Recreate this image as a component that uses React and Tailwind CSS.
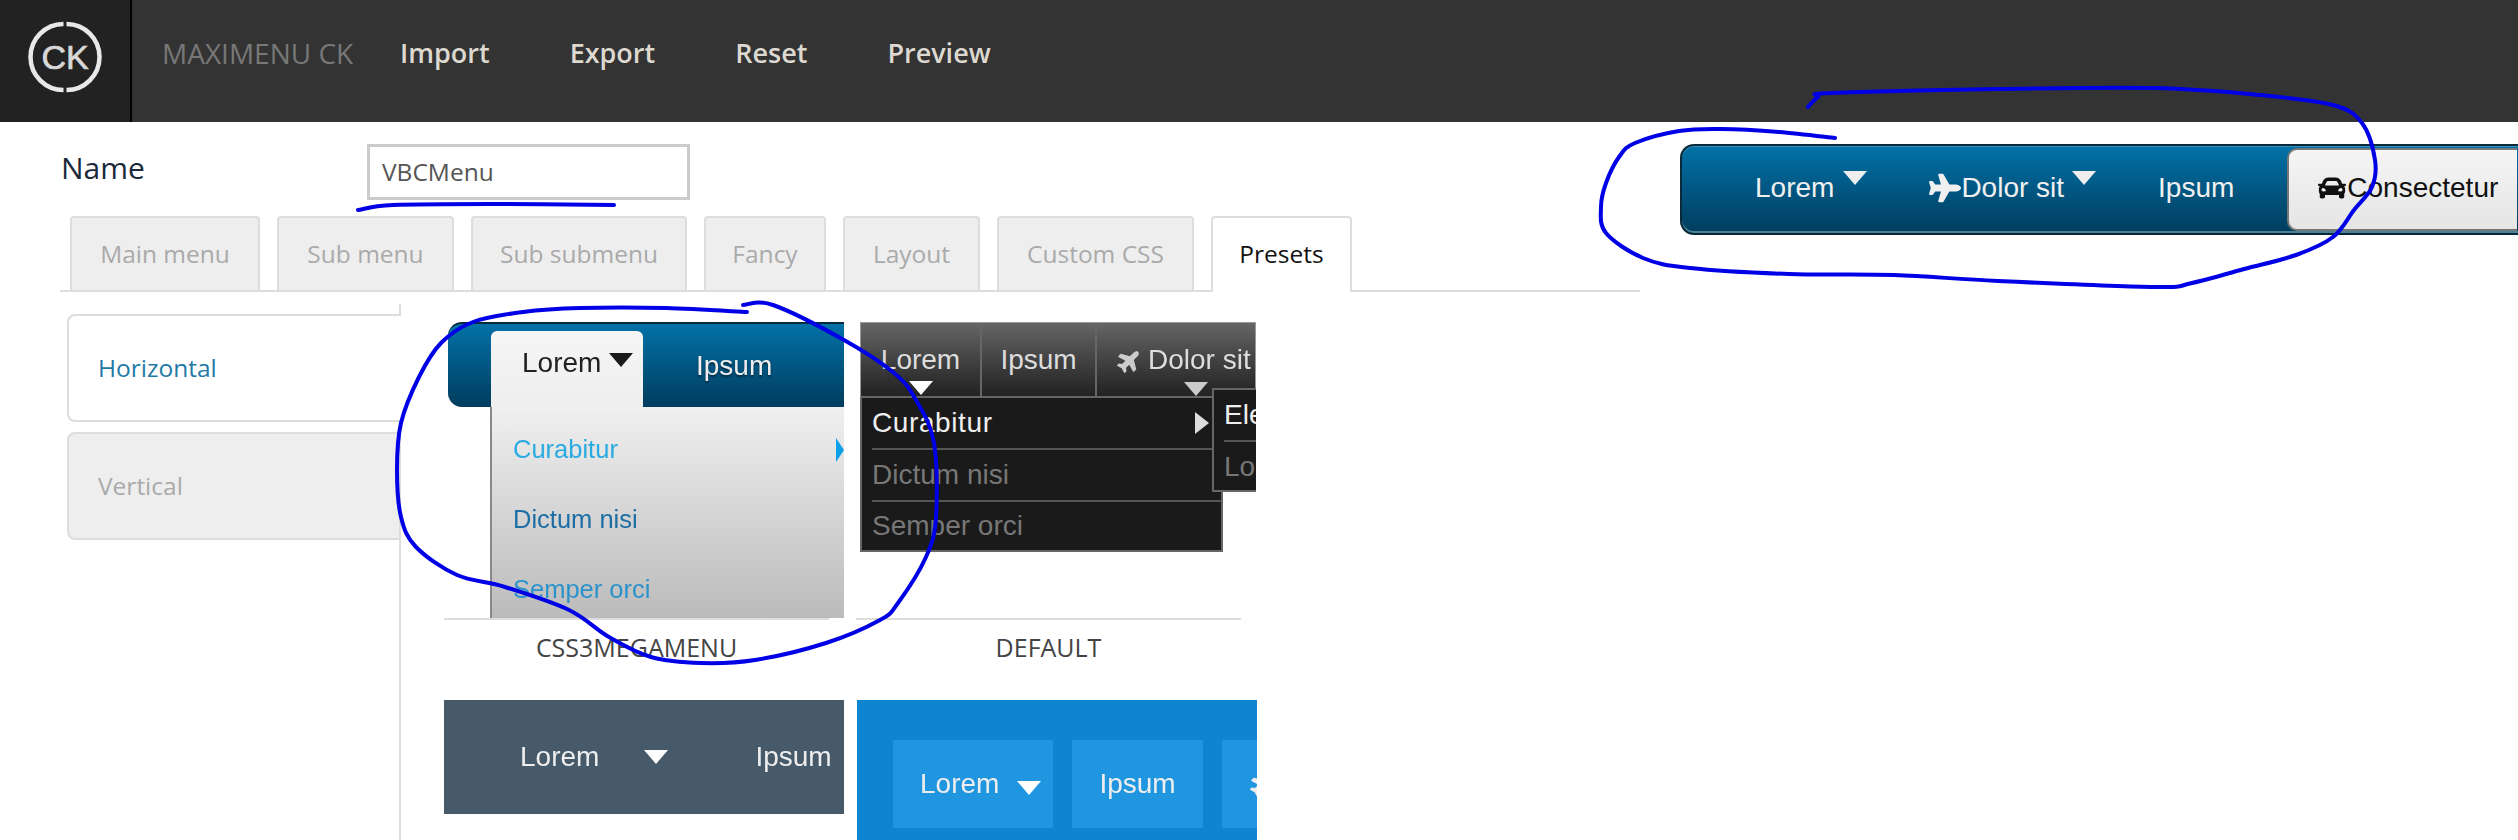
import { FaPlane, FaCar } from "react-icons/fa";

const tabs = [
  { label: "Main menu", width: "w-[190px]" },
  { label: "Sub menu", width: "w-[177px]" },
  { label: "Sub submenu", width: "w-[216px]" },
  { label: "Fancy", width: "w-[122px]" },
  { label: "Layout", width: "w-[137px]" },
  { label: "Custom CSS", width: "w-[197px]" },
];

// pen strokes someone scribbled over the screenshot
const scribbles = [
  [[1835,138],[1779,132],[1721,129],[1679,131],[1635,143],[1619,157],[1606,183],[1601,207],[1606,233],[1643,258],[1690,268],[1789,274],[1894,275],[1998,281],[2155,287],[2192,283],[2244,269],[2296,255],[2333,237],[2354,210],[2372,187],[2375,160],[2362,123],[2333,105],[2260,95],[2155,88],[1998,89],[1831,93],[1818,97],[1808,107]],
  [[747,312],[666,308],[580,308],[523,312],[473,322],[441,343],[419,377],[401,423],[397,470],[401,517],[416,547],[457,575],[505,587],[569,610],[609,637],[651,657],[701,663],[755,660],[826,643],[880,620],[898,603],[926,557],[936,517],[934,443],[916,400],[894,373],[844,340],[773,305],[743,305]],
  [[358,210],[393,205],[491,204],[614,205]],
];

const toPath = (pts) => {
  let d = `M${pts[0][0]} ${pts[0][1]}`;
  for (let i = 0; i < pts.length - 1; i++) {
    const p0 = pts[i - 1] || pts[i];
    const p1 = pts[i];
    const p2 = pts[i + 1];
    const p3 = pts[i + 2] || p2;
    const c1x = p1[0] + (p2[0] - p0[0]) / 6;
    const c1y = p1[1] + (p2[1] - p0[1]) / 6;
    const c2x = p2[0] - (p3[0] - p1[0]) / 6;
    const c2y = p2[1] - (p3[1] - p1[1]) / 6;
    d += ` C${c1x} ${c1y} ${c2x} ${c2y} ${p2[0]} ${p2[1]}`;
  }
  return d;
};

const Logo = () => (
  <svg width="130" height="122" viewBox="0 0 130 122">
    <g fill="none" stroke="#e8e8e8" strokeWidth="4.5">
      <path d="M63.5 24 A33 33 0 0 0 63.5 90" />
      <path d="M66.5 24 A33 33 0 0 1 66.5 90" />
    </g>
    <text
      x="65"
      y="69"
      textAnchor="middle"
      fontSize="34"
      fontFamily="Liberation Sans, sans-serif"
      fill="#d8d8d8"
      stroke="#d8d8d8"
      strokeWidth="0.7"
    >
      CK
    </text>
  </svg>
);

const Arrow = ({ className }) => (
  <span className={`block h-0 w-0 border-x-[12px] border-t-[14px] border-x-transparent ${className}`} />
);

const Header = () => (
  <header className="flex h-[122px] items-center bg-[#333] font-['Open_Sans',sans-serif]">
    <div className="h-full w-[132px] shrink-0 border-r-2 border-black bg-[#222]">
      <Logo />
    </div>
    <span className="ml-[30px] w-[238px] pb-[16px] text-[28px] text-[#777]">MAXIMENU CK</span>
    <nav className="flex gap-[80px] pb-[16px] text-[27px] font-semibold text-[#ddd9d0]">
      <a>Import</a>
      <a>Export</a>
      <a>Reset</a>
      <a>Preview</a>
    </nav>
  </header>
);

const TabBar = () => (
  <div className="mt-4 flex h-[76px] gap-[17px] border-b-2 border-[#ddd] pl-[10px] text-[24.5px]">
    {tabs.map((t) => (
      <div
        key={t.label}
        className={`flex h-[74px] ${t.width} items-center justify-center rounded-t border-2 border-b-0 border-[#ddd] bg-[#eee] text-[#aaa]`}
      >
        {t.label}
      </div>
    ))}
    <div className="flex h-[76px] w-[141px] items-center justify-center rounded-t border-2 border-b-0 border-[#ddd] bg-white pb-[2px] text-[#111]">
      Presets
    </div>
  </div>
);

const SideTabs = () => (
  <aside className="mt-3 h-[560px] w-[341px] shrink-0 border-r-2 border-[#ddd] pt-[10px] pl-[7px] text-[24.5px]">
    <div className="-mr-[2px] flex h-[108px] items-center rounded-l-lg border-2 border-r-0 border-[#ddd] bg-white pl-[29px] text-[#1f7aa5]">
      Horizontal
    </div>
    <div className="mt-[10px] flex h-[108px] items-center rounded-l-lg border-2 border-r-0 border-[#ddd] bg-[#eee] pl-[29px] text-[#aaa]">
      Vertical
    </div>
  </aside>
);

const MegaPreview = () => (
  <div className="h-[296px] w-[400px] pl-1 font-['Liberation_Sans',sans-serif] blur-[0.4px]">
    <div className="flex h-[85px] items-end rounded-l-[14px] border-t-2 border-[#0a2a3a] bg-gradient-to-b from-[#0272a8] to-[#013d5e] pl-[43px] text-[28px] text-[#eee]">
      <div className="flex h-[76px] w-[152px] items-start gap-2 rounded-t-md bg-gradient-to-b from-[#f6f6f6] to-[#eee] pt-[10px] pl-[31px] leading-[44px] text-[#222]">
        Lorem
        <Arrow className="mt-[12px] border-t-[#1a1a1a]" />
      </div>
      <span className="ml-[53px] self-center pt-[1px] [text-shadow:0_2px_2px_#012a40]">Ipsum</span>
    </div>
    <div className="relative ml-[42px] flex h-[211px] w-[354px] flex-col gap-[40px] border-l-2 border-[#888] bg-gradient-to-b from-[#f0f0f0] to-[#bbb] pt-[27px] pl-[21px] text-[25.5px] leading-[30px]">
      <span className="text-[#29abe2]">Curabitur</span>
      <span className="text-[#1c6ea4]">Dictum nisi</span>
      <span className="text-[#2b93cc]">Semper orci</span>
      <span className="absolute top-[31px] right-0 h-0 w-0 border-y-[12px] border-l-[8px] border-y-transparent border-l-[#0d9fe8]" />
    </div>
  </div>
);

const DefaultPreview = () => (
  <div className="relative ml-1 h-[230px] w-[396px] overflow-hidden font-['Liberation_Sans',sans-serif] text-[28px] blur-[0.4px]">
    <div className="flex h-[76px] border border-b-2 border-[#999] border-b-[#666] bg-gradient-to-b from-[#666] to-[#222] text-[#ddd]">
      <div className="flex w-[121px] flex-col items-center border-r-2 border-[#666] pt-[16px] leading-[42px]">
        Lorem
        <Arrow className="border-t-white" />
      </div>
      <div className="flex w-[115px] justify-center border-r-2 border-[#666] pt-[16px] leading-[42px]">Ipsum</div>
      <div className="relative flex-1 whitespace-nowrap pt-[16px] pl-[20px] leading-[42px]">
        <span className="inline-flex items-center gap-[6px]">
          <FaPlane className="-rotate-45 text-[25px] text-[#ccc]" />
          Dolor sit
        </span>
        <Arrow className="absolute top-[59px] left-[87px] border-t-[#ccc]" />
      </div>
    </div>
    <div className="h-[154px] w-[363px] border-2 border-t-0 border-[#666] bg-[#1a1a1a] pl-[10px] leading-[50px]">
      <div className="relative border-b-2 border-[#555] tracking-[0.6px] text-[#eee]">
        Curabitur
        <span className="absolute top-[14px] right-[12px] h-0 w-0 border-y-[11px] border-l-[14px] border-y-transparent border-l-[#ddd]" />
      </div>
      <div className="border-b-2 border-[#555] text-[#777]">Dictum nisi</div>
      <div className="-mt-px text-[#777]">Semper orci</div>
    </div>
    <div className="absolute top-[66px] left-[352px] h-[104px] w-[60px] border-2 border-[#666] bg-[#1a1a1a] pl-[10px] leading-[50px]">
      <div className="border-b-2 border-[#555] text-[#eee]">Ele</div>
      <div className="text-[#777]">Lo</div>
    </div>
  </div>
);

const SlatePreview = () => (
  <div className="flex h-[114px] w-[400px] items-center bg-[#465a6a] pl-[76px] font-['Liberation_Sans',sans-serif] text-[28px] text-[#eee] blur-[0.3px]">
    Lorem
    <Arrow className="mr-[87px] ml-[45px] border-t-white" />
    Ipsum
  </div>
);

const BluePreview = () => (
  <div className="ml-px flex h-[140px] w-[400px] items-start gap-[19px] overflow-hidden bg-[#0f84cf] pt-[40px] pl-[36px] font-['Liberation_Sans',sans-serif] text-[28px] text-[#eee] blur-[0.3px]">
    <div className="flex h-[88px] w-[160px] shrink-0 items-center bg-[#2196e0] pl-[27px]">
      Lorem
      <Arrow className="mt-[8px] ml-[18px] border-t-white" />
    </div>
    <div className="flex h-[88px] w-[131px] shrink-0 items-center justify-center bg-[#2196e0]">Ipsum</div>
    <div className="flex h-[88px] w-[100px] shrink-0 items-center bg-[#2196e0] pl-[28px]">
      <FaPlane className="-rotate-45 text-[25px]" />
    </div>
  </div>
);

const PresetCell = ({ name, children }) => (
  <div className="w-[385px]">
    {children}
    <div className="border-t-2 border-[#ddd] pt-[11px] pb-[37px] text-center text-[25px] leading-[32px] text-[#444]">
      {name}
    </div>
  </div>
);

const Presets = () => (
  <div className="ml-[43px] pt-[30px]">
    <div className="grid grid-cols-[385px_385px] gap-x-[27px]">
      <PresetCell name="CSS3MEGAMENU">
        <MegaPreview />
      </PresetCell>
      <PresetCell name="DEFAULT">
        <div className="h-[296px]">
          <DefaultPreview />
        </div>
      </PresetCell>
      <SlatePreview />
      <BluePreview />
    </div>
  </div>
);

const LivePreview = () => (
  <div className="ml-10 flex h-[91px] flex-1 items-center rounded-l-[14px] border-2 border-r-0 border-[#0a2a3a] bg-gradient-to-b from-[#0272a8] to-[#013d5e] pb-[3px] pl-[73px] font-['Liberation_Sans',sans-serif] text-[28px] whitespace-nowrap text-[#f0f0f0] shadow-[inset_0_1px_0_#3c8fb8,inset_0_-2px_0_#4d8296]">
    <span>Lorem</span>
    <Arrow className="mb-[20px] ml-[9px] border-t-[#eee]" />
    <FaPlane className="ml-[62px] h-[32px] w-[32px]" />
    <span>Dolor sit</span>
    <Arrow className="mb-[20px] ml-[8px] border-t-[#eee]" />
    <span className="ml-[62px]">Ipsum</span>
    <div className="-mb-[3px] ml-[53px] flex h-[83px] w-[230px] items-center rounded-l-[10px] border-2 border-r-0 border-[#777] bg-gradient-to-b from-[#f5f5f5] to-[#e5e5e5] pb-[3px] pl-[29px] text-[#111]">
      <FaCar className="h-[28px] w-[28px]" />
      <span className="ml-[1px]">Consectetur</span>
    </div>
  </div>
);

export default function App() {
  return (
    <div className="relative h-[840px] w-[2518px] overflow-hidden bg-white font-['Open_Sans',sans-serif]">
      <Header />
      <div className="flex pt-[22px]">
        <section className="w-[1640px] shrink-0 pl-[60px]">
          <div className="flex h-[56px]">
            <label className="w-[307px] pl-[1px] text-[30px] leading-[48px] text-[#1a2a3a]">Name</label>
            <input
              readOnly
              value="VBCMenu"
              className="h-[56px] w-[323px] border-[3px] border-[#ccc] pb-[2px] pl-[12px] text-[24.5px] text-[#555] outline-none"
            />
          </div>
          <TabBar />
          <div className="flex">
            <SideTabs />
            <Presets />
          </div>
        </section>
        <LivePreview />
      </div>
      <svg className="pointer-events-none absolute inset-0" width="2518" height="840" fill="none">
        {scribbles.map((pts, i) => (
          <path key={i} d={toPath(pts)} stroke="#0000e6" strokeWidth="4" strokeLinecap="round" strokeLinejoin="round" />
        ))}
      </svg>
    </div>
  );
}
